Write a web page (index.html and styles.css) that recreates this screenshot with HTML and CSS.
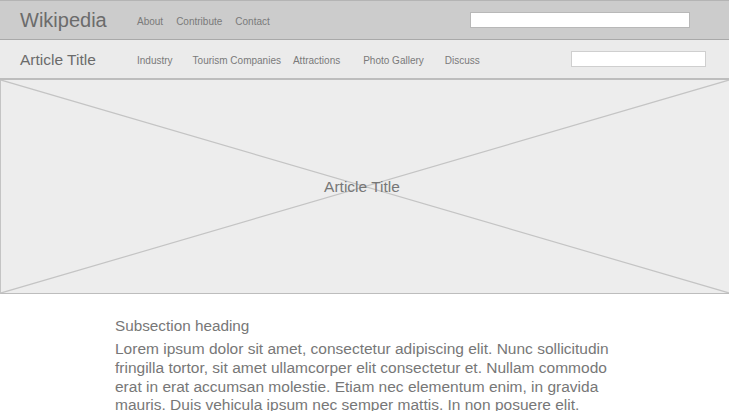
FILE: index.html
```html
<!DOCTYPE html>
<html>
<head>
<meta charset="utf-8">
<link rel="stylesheet" href="styles.css">
</head>
<body>
<header class="topbar">
  <div class="logo">Wikipedia</div>
  <nav class="nav nav-top">
    <span>About</span>
    <span>Contribute</span>
    <span>Contact</span>
  </nav>
  <div class="search search-top"></div>
</header>
<div class="subbar">
  <div class="title">Article Title</div>
  <nav class="nav nav-sub">
    <span class="i1">Industry</span>
    <span class="i2">Tourism Companies</span>
    <span class="i3">Attractions</span>
    <span class="i4">Photo Gallery</span>
    <span class="i5">Discuss</span>
  </nav>
  <div class="search search-sub"></div>
</div>
<section class="hero">
  <svg class="cross" viewBox="0 0 100 100" preserveAspectRatio="none">
    <line x1="0" y1="0" x2="100" y2="100" vector-effect="non-scaling-stroke"/>
    <line x1="100" y1="0" x2="0" y2="100" vector-effect="non-scaling-stroke"/>
  </svg>
  <div class="hero-title">Article Title</div>
</section>
<main class="content">
  <h2 class="subhead">Subsection heading</h2>
  <p class="body">Lorem ipsum dolor sit amet, consectetur adipiscing elit. Nunc sollicitudin fringilla tortor, sit amet ullamcorper elit consectetur et. Nullam commodo erat in erat accumsan molestie. Etiam nec elementum enim, in gravida mauris. Duis vehicula ipsum nec semper mattis. In non posuere elit.</p>
</main>
</body>
</html>
```
FILE: styles.css
```css
html, body {
  margin: 0;
  padding: 0;
  background: #ffffff;
  font-family: "Liberation Sans", Arial, sans-serif;
  width: 729px;
  height: 411px;
  overflow: hidden;
}
.topbar {
  height: 38px;
  background: #cccccc;
  border-top: 1px solid #b4b4b4;
  border-bottom: 1px solid #a9a9a9;
  display: flex;
  align-items: center;
  padding: 0 39px 0 20px;
}
.logo {
  width: 117px;
  font-size: 20px;
  color: #6b6b6b;
}
.nav {
  display: flex;
  align-items: center;
  font-size: 10px;
  color: #7a7a7a;
}
.nav-top {
  gap: 13px;
  padding-top: 2px;
}
.search {
  margin-left: auto;
  background: #ffffff;
}
.search-top {
  width: 218px;
  height: 14px;
  border: 1px solid #b8b8b8;
}
.subbar {
  height: 38px;
  background: #ebebeb;
  border-bottom: 2px solid #bdbdbd;
  display: flex;
  align-items: center;
  padding: 0 23px 0 20px;
}
.title {
  width: 117px;
  font-size: 15.5px;
  color: #6b6b6b;
  padding-top: 2px;
}
.nav-sub {
  padding-top: 3px;
}
.nav-sub .i2 { margin-left: 20px; }
.nav-sub .i3 { margin-left: 12px; }
.nav-sub .i4 { margin-left: 23px; }
.nav-sub .i5 { margin-left: 21px; }
.search-sub {
  width: 133px;
  height: 14px;
  border: 1px solid #cfcfcf;
}
.hero {
  position: relative;
  height: 213px;
  background: #ededed;
  border-left: 1px solid #c4c4c4;
  border-bottom: 1px solid #bdbdbd;
  display: flex;
  align-items: center;
  justify-content: center;
}
.cross {
  position: absolute;
  inset: 0;
  width: 100%;
  height: 100%;
}
.cross line {
  stroke: #c4c4c4;
  stroke-width: 1.2;
}
.hero-title {
  position: relative;
  font-size: 15.5px;
  color: #777777;
  margin-left: -6px;
}
.content {
  padding: 23px 0 0 115px;
  width: 520px;
}
.subhead {
  margin: 0;
  font-weight: normal;
  font-size: 15.3px;
  color: #777777;
  line-height: 18px;
}
.body {
  margin: 5px 0 0 0;
  font-size: 15.5px;
  line-height: 18.8px;
  color: #777777;
}
```
